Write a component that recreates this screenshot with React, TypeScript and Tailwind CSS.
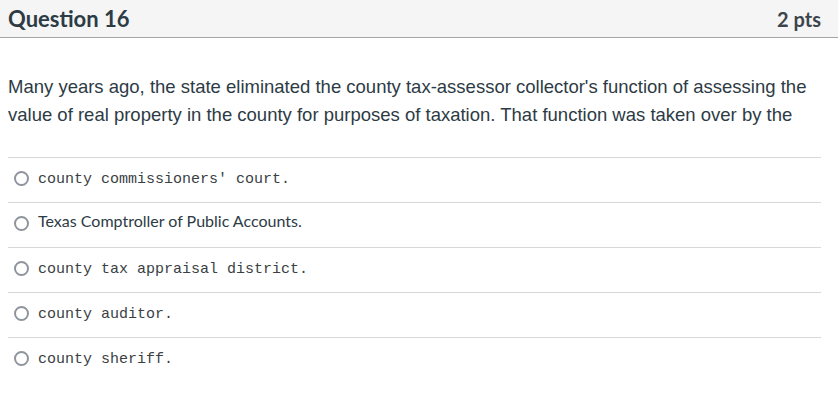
import React from 'react';

const options = [
  { text: "county commissioners' court.", mono: true },
  { text: 'Texas Comptroller of Public Accounts.', mono: false },
  { text: 'county tax appraisal district.', mono: true },
  { text: 'county auditor.', mono: true },
  { text: 'county sheriff.', mono: true },
];

const Radio: React.FC = () => (
  <span className="block w-[15px] h-[15px] rounded-full border-2 border-[#8f959e] bg-white shrink-0" />
);

const App: React.FC = () => {
  return (
    <div className="w-[838px] h-[417px] bg-white text-[#2d3b45] overflow-hidden">
      <div className="h-[38px] bg-[#f5f5f5] border-b border-[#a5a5a5] flex justify-between items-center pl-2 pr-[17px] font-['Lato',sans-serif] font-bold">
        <h2 className="text-[22px] leading-none">Question 16</h2>
        <span className="text-[20px] leading-none text-[#3d454c]">2 pts</span>
      </div>

      <div className="pl-2 pr-[17px]">
        <p className="mt-[35px] mb-[28px] font-['Liberation_Sans',Arial,sans-serif] text-[18.5px] leading-[28px]">
          Many years ago, the state eliminated the county tax-assessor collector's function of assessing the
          value of real property in the county for purposes of taxation. That function was taken over by the
        </p>

        <div>
          {options.map((opt, i) => (
            <div key={i} className="h-[45px] border-t border-[#d8d8d8] flex items-center pl-[6px] pb-[3px]">
              <Radio />
              <span
                className={
                  opt.mono
                    ? "ml-[9px] mt-[3px] font-['Liberation_Mono','Courier_New',monospace] text-[15px] text-[#3a3f44]"
                    : "ml-[9px] mb-[6px] font-['Lato',sans-serif] text-[16px]"
                }
              >
                {opt.text}
              </span>
            </div>
          ))}
        </div>
      </div>
    </div>
  );
};

export default App;
